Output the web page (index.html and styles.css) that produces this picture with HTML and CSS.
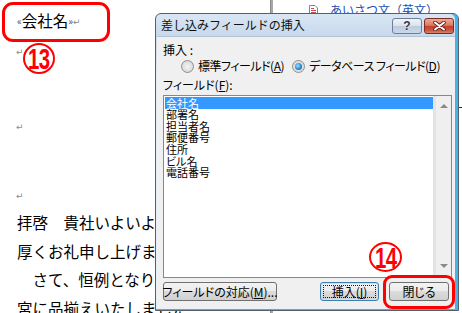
FILE: index.html
```
<!DOCTYPE html>
<html lang="ja">
<head>
<meta charset="utf-8">
<title>差し込みフィールドの挿入</title>
<link rel="stylesheet" href="styles.css">
</head>
<body>
<div class="page">
  <div class="doc">
    <div class="field-box"><span class="chev">«</span>会社名<span class="chev">»</span><span class="ret">↵</span></div>
    <div class="mark m1"><span class="ret">↵</span></div>
    <div class="mark m2"><span class="ret">↵</span></div>
    <div class="mark m3"><span class="ret">↵</span></div>
    <div class="body-text">
      <p>拝啓　貴社いよいよご清栄のこととお慶び申し上げます。</p>
      <p>厚くお礼申し上げます。</p>
      <p>　さて、恒例となりました</p>
      <p>宮に品揃えいたしました</p>
    </div>
  </div>
  <div class="sep"></div>
  <div class="pane">
    <div class="pane-item">
      <svg class="doc-icon" width="9" height="11" viewBox="0 0 9 11"><path d="M0.5 0.5H6L8.5 3V10.5H0.5Z" fill="#fff" stroke="#7a8490"/><path d="M2 3.5H5M2 5.5H7M2 7.5H7" stroke="#c0504d" stroke-width="1"/></svg>
      <span class="pane-link">あいさつ文（英文）</span>
    </div>
    <div class="pane-rule"></div>
  </div>
</div>

<div class="circ c13"><span>13</span></div>

<div class="dialog">
  <div class="titlebar">
    <span class="title">差し込みフィールドの挿入</span>
    <div class="tbtns">
      <span class="tb tb-help">?</span>
      <span class="tb tb-close"><svg width="13" height="10" viewBox="0 0 13 10"><path d="M2 1.5L11 8.5M11 1.5L2 8.5" stroke="#5a2218" stroke-width="3.6" stroke-linecap="round"/><path d="M2 1.5L11 8.5M11 1.5L2 8.5" stroke="#fff" stroke-width="2" stroke-linecap="round"/></svg></span>
    </div>
  </div>
  <div class="content">
    <div class="row">挿入 :</div>
    <div class="row radio-row">
      <span class="opt opt1"><span class="radio"></span><span class="opt-label">標準フィールド(<u>A</u>)</span></span>
      <span class="opt"><span class="radio on"><span class="dot"></span></span><span class="opt-label">データベース フィールド(<u>D</u>)</span></span>
    </div>
    <div class="row fld-label">フィールド(<u>F</u>):</div>
    <div class="listbox">
      <div class="items">
        <div class="item sel">会社名</div>
        <div class="item">部署名</div>
        <div class="item">担当者名</div>
        <div class="item">郵便番号</div>
        <div class="item">住所</div>
        <div class="item">ビル名</div>
        <div class="item">電話番号</div>
      </div>
      <div class="scroll">
        <span class="arrow up"></span>
        <span class="arrow down"></span>
      </div>
    </div>
    <div class="buttons">
      <span class="btn btn-map">フィールドの対応(<u>M</u>)...</span>
      <span class="btn btn-insert"><span class="focus">挿入(<u>I</u>)</span></span>
      <span class="btn btn-close">閉じる</span>
    </div>
  </div>
</div>

<div class="circ c14"><span>14</span></div>
<div class="red-box"></div>
</body>
</html>
```
FILE: styles.css
```
html, body {
  margin: 0;
  padding: 0;
}
body {
  width: 462px;
  height: 313px;
  overflow: hidden;
  position: relative;
  background: #fff;
  font-family: "Noto Sans CJK JP", sans-serif;
  color: #000;
}
.page {
  display: flex;
  height: 313px;
}
.doc {
  width: 270px;
  flex: none;
  overflow: hidden;
  padding-top: 2px;
  font-size: 15.5px;
}
.field-box {
  margin-left: 2px;
  width: 108px;
  height: 40px;
  box-sizing: border-box;
  border: 3px solid #ff0000;
  border-radius: 11px;
  padding-left: 12px;
  line-height: 30px;
  white-space: nowrap;
}
.chev {
  font-size: 10px;
  color: #3d4e78;
  vertical-align: 2px;
}
.ret {
  font-family: "DejaVu Sans", sans-serif;
  font-size: 9px;
  color: #8a8a8a;
  vertical-align: 2px;
}
.mark {
  margin-left: 16px;
  height: 16px;
  line-height: 16px;
}
.m2 { margin-top: 59px; }
.m3 { margin-top: 53px; }
.body-text {
  margin-top: 6px;
  margin-left: 17px;
  white-space: nowrap;
}
.body-text p {
  margin: 0;
  line-height: 28.5px;
  height: 28.5px;
}
.sep {
  width: 3px;
  flex: none;
  background: #a7a7a7;
  border-left: 1px solid #8a8a8a;
  box-sizing: border-box;
}
.pane {
  flex: 1;
  background: #fff;
}
.pane-item {
  display: flex;
  align-items: center;
  padding-left: 36px;
  margin-top: 3px;
  height: 14px;
  gap: 12px;
}
.doc-icon { flex: none; }
.pane-link {
  font-size: 12px;
  color: #1f4fb0;
  white-space: nowrap;
  line-height: 14px;
}
.pane-rule {
  margin-top: 90px;
  border-top: 1px solid #333;
}

/* annotations */
.circ {
  position: absolute;
  box-sizing: border-box;
  border: 2px solid #ff0000;
  border-radius: 50%;
  display: flex;
  align-items: center;
  justify-content: center;
  color: #ff0000;
  font-family: "Liberation Sans", sans-serif;
  font-weight: bold;
  font-size: 30px;
  line-height: 1;
  background: transparent;
}
.circ span {
  display: inline-block;
  transform: scaleX(0.68);
  letter-spacing: -1px;
  margin-top: 1px;
}
.c13 { left: 23px; top: 43px; width: 32px; height: 31px; }
.c14 { left: 369px; top: 242px; width: 33px; height: 30px; }
.red-box {
  position: absolute;
  left: 383px;
  top: 275px;
  width: 72px;
  height: 34px;
  box-sizing: border-box;
  border: 3px solid #ff0000;
  border-radius: 9px;
}

/* dialog */
.dialog {
  position: absolute;
  left: 155px;
  top: 13px;
  width: 304px;
  height: 298px;
  box-sizing: border-box;
  border: 1px solid #55606c;
  border-radius: 6px 6px 0 0;
  background: linear-gradient(#d9e6f4, #c8d9ec 22px, #e2ebf5 60px, #e8eff7);
  box-shadow: inset -3px 0 0 #46b3e8, inset 0 -1px 0 #46b3e8;
  display: flex;
  flex-direction: column;
  font-size: 12px;
  font-feature-settings: "palt" 1;
}
.titlebar {
  height: 22px;
  flex: none;
  display: flex;
  justify-content: space-between;
  padding-left: 5px;
  padding-right: 4px;
}
.title {
  line-height: 22px;
  font-feature-settings: normal;
  font-size: 12px;
  color: #101010;
  white-space: nowrap;
}
.tbtns {
  display: flex;
  gap: 2px;
  padding-top: 4px;
}
.tb {
  width: 30px;
  height: 16px;
  box-sizing: border-box;
  border-radius: 3px;
  display: flex;
  align-items: center;
  justify-content: center;
}
.tb-help {
  border: 1px solid #6c7f98;
  background: linear-gradient(#f0f4f9, #d8e2ee 50%, #bccbdd 50%, #cbd8e8);
  font-family: "Liberation Sans", sans-serif;
  font-weight: bold;
  font-size: 12px;
  color: #2c3a4a;
  text-shadow: 0 0 2px #fff;
}
.tb-close {
  border: 1px solid #7b2c22;
  background: linear-gradient(#eba999, #dc7b65 45%, #c4402c 52%, #cd5540 80%, #dc8168);
}
.content {
  flex: 1;
  margin: 0 3px 2px 1px;
  background: #f0f0f0;
  border-top: 1px solid #b3c3d6;
  padding: 5px 3px 0 6px;
  display: flex;
  flex-direction: column;
}
.row {
  height: 16px;
  line-height: 16px;
  white-space: nowrap;
}
.radio-row {
  display: flex;
  align-items: center;
  padding-left: 18px;
}
.opt {
  display: flex;
  align-items: center;
  gap: 4px;
  flex: none;
}
.opt1 { width: 111px; }
.opt-label { letter-spacing: -0.5px; }
.radio {
  width: 13px;
  height: 13px;
  box-sizing: border-box;
  border-radius: 50%;
  border: 1px solid #8e8f8f;
  background: radial-gradient(circle at 50% 50%, #f4f4f4 0, #e4e4e4 45%, #cfcfcf 100%);
  display: flex;
  align-items: center;
  justify-content: center;
  flex: none;
}
.radio .dot {
  width: 7px;
  height: 7px;
  border-radius: 50%;
  background: radial-gradient(circle at 40% 40%, #9fe4ff 0, #2a8ad8 55%, #0b3f80 100%);
}
.fld-label { margin-top: 3px; }
.listbox {
  margin-top: 2px;
  height: 183px;
  box-sizing: border-box;
  border: 1px solid #828790;
  background: #fff;
  display: flex;
  flex: none;
}
.items {
  flex: 1;
  padding-top: 1px;
  padding-left: 1px;
}
.item {
  height: 11.7px;
  line-height: 11.7px;
  padding-left: 1px;
  white-space: nowrap;
  font-size: 11px;
}
.item.sel {
  background: #3399ff;
  color: #fff;
  height: 12px;
  line-height: 12px;
}
.scroll {
  width: 18px;
  flex: none;
  background: linear-gradient(90deg, #e4e4e4 0 3px, #efefef 3px);
  display: flex;
  flex-direction: column;
  justify-content: space-between;
  align-items: center;
  padding: 8px 0 9px 3px;
  box-sizing: border-box;
}
.arrow {
  width: 0;
  height: 0;
  border-left: 4px solid transparent;
  border-right: 4px solid transparent;
}
.arrow.up { border-bottom: 4px solid #8a8a8a; }
.arrow.down { border-top: 4px solid #8a8a8a; }
.buttons {
  margin-top: 4px;
  display: flex;
  height: 19px;
  padding-right: 3px;
}
.btn {
  height: 19px;
  box-sizing: border-box;
  border: 1px solid #707070;
  border-radius: 3px;
  background: linear-gradient(#f3f3f3, #ebebeb 50%, #dcdcdc 50%, #cfcfcf);
  display: flex;
  align-items: center;
  justify-content: center;
  white-space: nowrap;
  line-height: 15px;
  font-size: 12px;
}
.btn-map { width: 114px; }
.btn-insert {
  width: 59px;
  margin-left: auto;
  border-color: #3c7fb1;
  box-shadow: inset 0 0 0 1px #bfe6f8;
  padding: 2px;
}
.focus {
  flex: 1;
  align-self: stretch;
  border: 1px dotted #1a1a1a;
  display: flex;
  align-items: center;
  justify-content: center;
}
.btn-close {
  width: 60px;
  margin-left: 10px;
}
```
